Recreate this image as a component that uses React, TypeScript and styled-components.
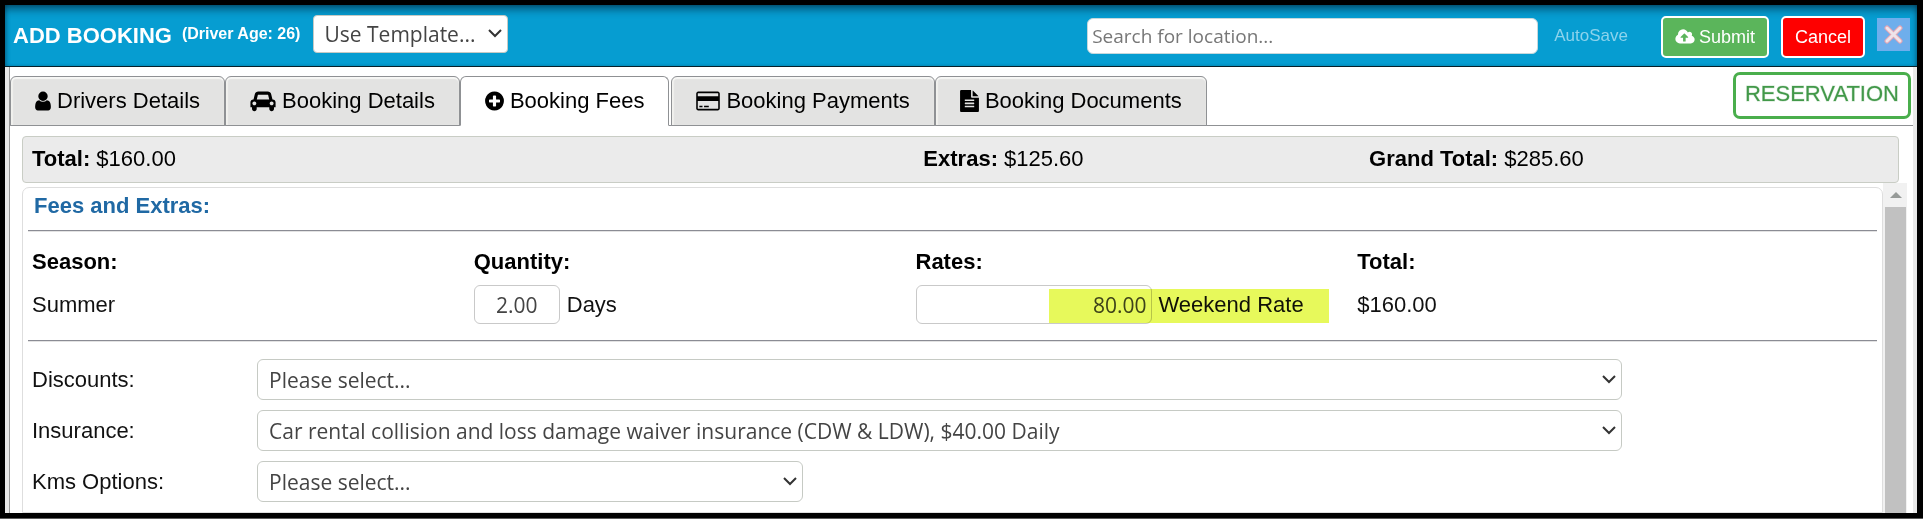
import React from 'react';
import styled, { createGlobalStyle } from 'styled-components';

const GlobalStyle = createGlobalStyle`
  *, *::before, *::after { box-sizing: border-box; }
  body {
    margin: 0;
    background: #5c5c5c;
    color: #111;
    font: 22px/26px "Liberation Sans", Arial, sans-serif;
  }
  button, input, select { font: inherit; color: inherit; margin: 0; }
`;

const fieldFont = '"Open Sans", "Noto Sans", sans-serif';

const Window = styled.div`
  display: flex;
  flex-direction: column;
  min-height: calc(100vh - 1px);
  border: solid #000;
  border-width: 5px 6px 5px 5px;
  background: #fff;
`;

const Header = styled.header`
  display: flex;
  align-items: center;
  height: 62px;
  padding: 0 7px 0 8px;
  border-bottom: 1px solid #06202b;
  background: #069dd1;
  box-shadow: inset 0 8px 8px -4px rgba(0, 30, 50, 0.6), inset 3px 0 4px -2px rgba(0, 30, 50, 0.4), inset -3px 0 4px -2px rgba(0, 30, 50, 0.4);
  color: #fff;
`;

const Title = styled.h1`
  margin: 0 10px 0 0;
  font-size: 22px;
  white-space: nowrap;
`;

const DriverAge = styled.strong`
  margin: 0 13px 4px 0;
  font-size: 16px;
  white-space: nowrap;
`;

const SelectWrap = styled.div<{ $span?: number }>`
  position: relative;
  grid-column: span ${(p) => p.$span ?? 1};
`;

const Select = styled.select`
  display: block;
  width: 100%;
  height: 41px;
  padding: 0 32px 0 11px;
  border: 1px solid #c6cac4;
  border-radius: 6px;
  background: #fff;
  color: #444;
  font-family: ${fieldFont};
  font-size: 21px;
  appearance: none;
`;

const TemplateWrap = styled(SelectWrap)`
  width: 195px;
  margin-bottom: 4px;
`;

const TemplateSelect = styled(Select)`
  height: 38px;
  padding-left: 10px;
  border-radius: 4px;
`;

const ChevronIcon = styled.svg`
  position: absolute;
  right: 6px;
  top: 50%;
  width: 14px;
  height: 9px;
  margin-top: -5px;
  fill: none;
  stroke: #333;
  stroke-width: 2;
  pointer-events: none;
`;

const SearchInput = styled.input`
  width: 451px;
  height: 36px;
  margin: 0 16px 0 auto;
  padding: 0 4px;
  border: 1px solid #c6d8dc;
  border-radius: 6px;
  background: #fff;
  color: #444;
  font-family: ${fieldFont};
  font-size: 19px;
  &::placeholder { color: #777; opacity: 1; }
`;

const AutoSave = styled.span`
  margin-right: 33px;
  color: #8cd3ec;
  font-size: 17px;
`;

const ActionButton = styled.button<{ $color: string }>`
  display: flex;
  align-items: center;
  gap: 4px;
  height: 42px;
  margin: 2px 12px 0 0;
  padding: 0 12px;
  border: 2px solid #fff;
  border-radius: 5px;
  background: ${(p) => p.$color};
  color: #fff;
  font-size: 18px;
`;

const CloseButton = styled.button`
  display: grid;
  place-items: center;
  width: 33px;
  height: 33px;
  margin-bottom: 2px;
  padding: 0;
  border: 0;
  background: #6eaeec;
`;

const Body = styled.main`
  display: flex;
  flex: 1;
  flex-direction: column;
  margin: 0 4px;
  border-left: 1px solid #999;
  background: #fff;
  box-shadow: -4px 0 #e9e9e9, 4px 0 #e9e9e9;
`;

const TabBar = styled.nav`
  display: flex;
  align-items: flex-end;
  height: 59px;
  padding-right: 2px;
  border-bottom: 1px solid #8f9194;
`;

const Tab = styled.button<{ $active?: boolean }>`
  display: flex;
  align-items: center;
  gap: 6px;
  height: 50px;
  margin: 0 ${(p) => (p.$active ? '2px' : '0')} -1px 0;
  padding: 0 24px;
  border: 1px solid #8f9194;
  border-bottom-color: ${(p) => (p.$active ? '#fff' : '#8f9194')};
  border-radius: 6px 6px 0 0;
  background: ${(p) => (p.$active ? '#fff' : '#e3e3e2')};
  box-shadow: ${(p) => (p.$active ? 'none' : 'inset 0 2px 1px #f7f7f5, inset 2px 0 1px #f0f0ee')};
  color: #000;
  white-space: nowrap;
`;

const TabIcon = styled.svg`
  flex: none;
  height: 22px;
  fill: currentColor;
`;

const StatusBadge = styled.div`
  align-self: flex-start;
  height: 47px;
  margin: 5px 0 0 auto;
  padding: 6px 9px;
  border: 3px solid #4aae4c;
  border-radius: 7px;
  color: #43994a;
  -webkit-text-stroke: 1px #43994a44;
`;

const Summary = styled.section`
  display: grid;
  grid-template-columns: 48% 24% 24%;
  align-items: center;
  height: 47px;
  margin: 10px 14px 0 12px;
  padding: 0 9px 2px;
  border: 1px solid #c9cdc5;
  border-radius: 4px;
  background: #ebebeb;
  color: #000;
`;

const ScrollArea = styled.div`
  display: flex;
  flex: 1;
  margin: 0 6px 0 12px;
`;

const Panel = styled.section`
  flex: 1;
  margin-top: 4px;
  padding: 5px 5px 10px;
  border: 1px solid #dedede;
  border-radius: 7px 7px 0 0;
`;

const PanelTitle = styled.h2`
  margin: 0 0 11px 6px;
  color: #2069a4;
  font-size: 22px;
`;

const Divider = styled.hr`
  height: 2px;
  margin: 0;
  border: solid;
  border-width: 1px 0;
  border-color: #8b8c94 transparent #e3e3e3;
`;

const FeeTable = styled.table`
  width: calc(96% - 8px);
  margin: 17px 0 16px 4px;
  border-collapse: collapse;
  table-layout: fixed;
  th { padding: 0 0 10px; text-align: left; color: #000; }
  td { padding: 0; }
`;

const Amount = styled.div`
  position: relative;
  display: flex;
  align-items: center;
  gap: 7px;
`;

const NumberInput = styled.input<{ $wide?: boolean }>`
  width: ${(p) => (p.$wide ? '236px' : '86px')};
  height: 39px;
  padding: 0 4px;
  border: 1px solid #c9c9c9;
  border-radius: 6px;
  background: #fff;
  color: #444;
  font-family: ${fieldFont};
  font-size: 21px;
  text-align: ${(p) => (p.$wide ? 'right' : 'center')};
`;

const Highlight = styled.span`
  position: absolute;
  top: 4px;
  left: 133px;
  width: 280px;
  height: 34px;
  background: #e7f95b;
  mix-blend-mode: multiply;
  pointer-events: none;
`;

const Options = styled.div`
  display: grid;
  grid-template-columns: 225px 546fr 820fr 255fr;
  row-gap: 10px;
  align-items: center;
  margin: 17px 0 0 4px;
`;

const OptionLabel = styled.label`
  grid-column: 1;
`;

const ScrollTrack = styled.div`
  width: 24px;
  display: flex;
  flex-direction: column;
  align-items: center;
  padding: 9px 1px 0 2px;
  background: #f1f1f1;
  svg { fill: #969a98; margin-bottom: 9px; }
`;

const ScrollThumb = styled.div`
  flex: 1;
  width: 100%;
  background: #c1c1c1;
`;

const icons = {
  user: {
    width: 16,
    box: '256 0 1280 1792',
    path: 'M1536 1399q0 109-62.5 187t-150.5 78h-854q-88 0-150.5-78t-62.5-187q0-85 8.5-160.5t31.5-152 58.5-131 94-89 134.5-34.5q131 128 313 128t313-128q76 0 134.5 34.5t94 89 58.5 131 31.5 152 8.5 160.5zm-256-887q0 159-112.5 271.5t-271.5 112.5-271.5-112.5-112.5-271.5 112.5-271.5 271.5-112.5 271.5 112.5 112.5 271.5z',
  },
  car: {
    width: 26,
    box: '0 0 2048 1792',
    path: 'M480 1088q0-66-47-113t-113-47-113 47-47 113 47 113 113 47 113-47 47-113zm36-320h1016l-89-357q-2-8-14-17.5t-21-9.5h-768q-9 0-21 9.5t-14 17.5zm1372 320q0-66-47-113t-113-47-113 47-47 113 47 113 113 47 113-47 47-113zm160-96v384q0 14-9 23t-23 9h-96v128q0 80-56 136t-136 56-136-56-56-136v-128h-1024v128q0 80-56 136t-136 56-136-56-56-136v-128h-96q-14 0-23-9t-9-23v-384q0-93 65.5-158.5t158.5-65.5h28l105-419q23-94 104-157.5t179-63.5h768q98 0 179 63.5t104 157.5l105 419h28q93 0 158.5 65.5t65.5 158.5z',
  },
  plus: {
    width: 19,
    box: '128 0 1536 1792',
    path: 'M1344 960v-128q0-26-19-45t-45-19h-256v-256q0-26-19-45t-45-19h-128q-26 0-45 19t-19 45v256h-256q-26 0-45 19t-19 45v128q0 26 19 45t45 19h256v256q0 26 19 45t45 19h128q26 0 45-19t19-45v-256h256q26 0 45-19t19-45zm320-64q0 209-103 385.5t-279.5 279.5-385.5 103-385.5-103-279.5-279.5-103-385.5 103-385.5 279.5-279.5 385.5-103 385.5 103 279.5 279.5 103 385.5z',
  },
  card: {
    width: 24,
    box: '0 0 1920 1792',
    path: 'M1760 128q66 0 113 47t47 113v1216q0 66-47 113t-113 47h-1600q-66 0-113-47t-47-113v-1216q0-66 47-113t113-47h1600zm-1600 128q-13 0-22.5 9.5t-9.5 22.5v224h1664v-224q0-13-9.5-22.5t-22.5-9.5h-1600zm1600 1280q13 0 22.5-9.5t9.5-22.5v-608h-1664v608q0 13 9.5 22.5t22.5 9.5h1600zm-1504-128v-128h256v128h-256zm384 0v-128h384v128h-384z',
  },
  file: {
    width: 19,
    box: '128 0 1536 1792',
    path: 'M1596 476q14 14 28 36h-472v-472q22 14 36 28zm-476 164h544v1056q0 40-28 68t-68 28h-1344q-40 0-68-28t-28-68v-1600q0-40 28-68t68-28h800v544q0 40 28 68t68 28zm160 736v-64q0-14-9-23t-23-9h-704q-14 0-23 9t-9 23v64q0 14 9 23t23 9h704q14 0 23-9t9-23zm0-256v-64q0-14-9-23t-23-9h-704q-14 0-23 9t-9 23v64q0 14 9 23t23 9h704q14 0 23-9t9-23zm0-256v-64q0-14-9-23t-23-9h-704q-14 0-23 9t-9 23v64q0 14 9 23t23 9h704q14 0 23-9t9-23z',
  },
};

const tabs: { label: string; icon: keyof typeof icons }[] = [
  { label: 'Drivers Details', icon: 'user' },
  { label: 'Booking Details', icon: 'car' },
  { label: 'Booking Fees', icon: 'plus' },
  { label: 'Booking Payments', icon: 'card' },
  { label: 'Booking Documents', icon: 'file' },
];

const options = [
  { id: 'discounts', label: 'Discounts:', value: 'Please select...', span: 2 },
  { id: 'insurance', label: 'Insurance:', value: 'Car rental collision and loss damage waiver insurance (CDW & LDW), $40.00 Daily', span: 2 },
  { id: 'kms', label: 'Kms Options:', value: 'Please select...', span: 1 },
];

const Chevron = () => (
  <ChevronIcon viewBox="0 0 14 9" aria-hidden="true">
    <path d="M1 1l6 6 6-6" />
  </ChevronIcon>
);

export default function App() {
  return (
    <Window>
      <GlobalStyle />
      <Header>
        <Title>ADD BOOKING</Title>
        <DriverAge>(Driver Age: 26)</DriverAge>
        <TemplateWrap>
          <TemplateSelect aria-label="Template">
            <option>Use Template...</option>
          </TemplateSelect>
          <Chevron />
        </TemplateWrap>
        <SearchInput type="text" aria-label="Location" placeholder="Search for location..." />
        <AutoSave>AutoSave</AutoSave>
        <ActionButton type="button" $color="#5bb55b">
          <svg width="20" height="18" viewBox="0 0 1920 1792" fill="#fff" aria-hidden="true">
            <path d="M1280 928q0-14-9-23l-352-352q-9-9-23-9t-23 9l-351 351q-10 12-10 24 0 14 9 23t23 9h224v352q0 13 9.5 22.5t22.5 9.5h192q13 0 22.5-9.5t9.5-22.5v-352h224q13 0 22.5-9.5t9.5-22.5zm640 224q0 159-112.5 271.5t-271.5 112.5h-1088q-185 0-316.5-131.5t-131.5-316.5q0-130 70-240t188-165q-2-30-2-43 0-212 150-362t362-150q156 0 285.5 87t188.5 231q71-62 166-62 106 0 181 75t75 181q0 76-41 138 130 31 213.5 135.5t83.5 238.5z" />
          </svg>
          Submit
        </ActionButton>
        <ActionButton type="button" $color="#fe0000">Cancel</ActionButton>
        <CloseButton type="button" aria-label="Close">
          <svg width="19" height="19" viewBox="0 0 19 19" strokeLinecap="round" aria-hidden="true">
            <path d="M3 3l13 13M16 3L3 16" stroke="#e3a5b4" strokeWidth="5" />
            <path d="M3 3l13 13M16 3L3 16" stroke="#eee4ea" strokeWidth="3" />
          </svg>
        </CloseButton>
      </Header>
      <Body>
        <TabBar>
          {tabs.map(({ label, icon }) => (
            <Tab key={label} type="button" $active={icon === 'plus'}>
              <TabIcon width={icons[icon].width} viewBox={icons[icon].box} aria-hidden="true">
                <path d={icons[icon].path} />
              </TabIcon>
              {label}
            </Tab>
          ))}
          <StatusBadge>RESERVATION</StatusBadge>
        </TabBar>
        <Summary>
          <span><b>Total:</b> $160.00</span>
          <span><b>Extras:</b> $125.60</span>
          <span><b>Grand Total:</b> $285.60</span>
        </Summary>
        <ScrollArea>
          <Panel>
            <PanelTitle>Fees and Extras:</PanelTitle>
            <Divider />
            <FeeTable>
              <thead>
                <tr>
                  <th>Season:</th>
                  <th>Quantity:</th>
                  <th>Rates:</th>
                  <th>Total:</th>
                </tr>
              </thead>
              <tbody>
                <tr>
                  <td>Summer</td>
                  <td>
                    <Amount>
                      <NumberInput id="quantity" type="text" defaultValue="2.00" />
                      <label htmlFor="quantity">Days</label>
                    </Amount>
                  </td>
                  <td>
                    <Amount>
                      <NumberInput id="rate" type="text" defaultValue="80.00" $wide />
                      <label htmlFor="rate">Weekend Rate</label>
                      <Highlight />
                    </Amount>
                  </td>
                  <td>$160.00</td>
                </tr>
              </tbody>
            </FeeTable>
            <Divider />
            <Options>
              {options.map(({ id, label, value, span }) => (
                <React.Fragment key={id}>
                  <OptionLabel htmlFor={id}>{label}</OptionLabel>
                  <SelectWrap $span={span}>
                    <Select id={id}>
                      <option>{value}</option>
                    </Select>
                    <Chevron />
                  </SelectWrap>
                </React.Fragment>
              ))}
            </Options>
          </Panel>
          <ScrollTrack>
            <svg width="12" height="6" viewBox="0 0 12 6" aria-hidden="true">
              <path d="M6 0l6 6H0z" />
            </svg>
            <ScrollThumb />
          </ScrollTrack>
        </ScrollArea>
      </Body>
    </Window>
  );
}
